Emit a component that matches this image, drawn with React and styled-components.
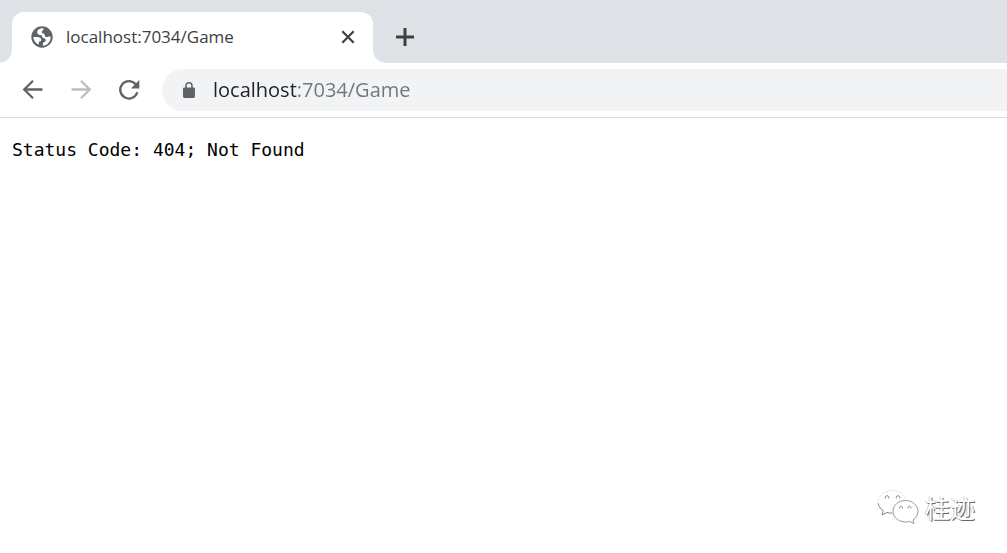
import React from "react";
import styled, { createGlobalStyle } from "styled-components";

const GlobalStyle = createGlobalStyle`
  * {
    box-sizing: border-box;
  }
  body {
    margin: 0;
    background: #fff;
    font-family: "Open Sans", "Noto Sans", sans-serif;
  }
`;

const Browser = styled.div`
  display: flex;
  flex-direction: column;
  min-height: 100vh;
`;

const TabStrip = styled.header`
  display: flex;
  align-items: stretch;
  padding: 12px 12px 0;
  background: #dee1e6;
`;

const Tab = styled.div`
  position: relative;
  display: flex;
  align-items: center;
  width: 361px;
  height: 51px;
  padding: 0 13px 2px 18px;
  border-radius: 12px 12px 0 0;
  background: #fff;
  /* flared feet on both sides of the tab */
  &::before,
  &::after {
    content: "";
    position: absolute;
    bottom: 0;
    width: 12px;
    height: 12px;
  }
  &::before {
    right: 100%;
    background: radial-gradient(circle at 0 0, transparent 11px, #fff 12px);
  }
  &::after {
    left: 100%;
    background: radial-gradient(circle at 100% 0, transparent 11px, #fff 12px);
  }
`;

const TabTitle = styled.span`
  flex: 1;
  margin-left: 12px;
  font-size: 17px;
  line-height: 24px;
  color: #3c4043;
`;

const IconButton = styled.button`
  display: flex;
  align-items: center;
  justify-content: center;
  width: ${({ $small }) => ($small ? "24px" : "40px")};
  height: ${({ $small }) => ($small ? "24px" : "40px")};
  padding: 0;
  border: 0;
  border-radius: 50%;
  background: none;
  color: ${({ $dark }) => ($dark ? "#3c4043" : "#5f6368")};
  &:disabled {
    color: #bdbec0;
  }
`;

const NewTab = styled.div`
  display: flex;
  align-items: center;
  margin-left: 12px;
  padding-bottom: 2px;
`;

const Toolbar = styled.nav`
  display: flex;
  align-items: center;
  padding: 6px 0 6px 13px;
  border-bottom: 1px solid #dadce0;
`;

const NavButtons = styled.div`
  display: flex;
  gap: 8px;
  margin-right: 13px;
`;

const AddressBar = styled.label`
  display: flex;
  flex: 1;
  align-items: center;
  height: 42px;
  padding-left: 20px;
  border-radius: 21px 0 0 21px;
  background: #f1f3f4;
  color: #5f6368;
`;

/* the host part of the address is darker than the rest */
const AddressInput = styled.input`
  flex: 1;
  min-width: 0;
  margin-left: 17px;
  padding: 0;
  border: 0;
  outline: 0;
  font: 20px/28px "Open Sans", "Noto Sans", sans-serif;
  color: transparent;
  caret-color: #202124;
  background: linear-gradient(to right, #202124 84px, #70757a 84px);
  background-clip: text;
  -webkit-background-clip: text;
`;

const Page = styled.main`
  display: flex;
  flex: 1;
  flex-direction: column;
  justify-content: space-between;
  padding: 20px 32px 28px 12px;
`;

const Message = styled.pre`
  margin: 0;
  font: 18px/24px "DejaVu Sans Mono", monospace;
  color: #000;
`;

const Watermark = styled.div`
  display: flex;
  align-items: center;
  align-self: flex-end;
  gap: 6px;
  font: 25px/32px "Noto Sans CJK SC", sans-serif;
  color: #fff;
  text-shadow: 1px 1px 0 #666, -1px 0 0 #ccc;
`;

const GlobeIcon = () => (
  <svg width="24" height="24" viewBox="0 0 24 24" aria-hidden="true">
    <circle cx="12" cy="12" r="10.7" fill="#5f6368" />
    <path
      fill="#fff"
      d="M13.500 3.400C10.300 3 7.200 4.800 7.200 7.200c0 2 1.500 2.600 3.200 2.700 1.400.1 1.700.7 1.800 1.700.1 1.200.8 1.600 1.800 1.700 1.100.2 1.700.8 1.700 1.900 0 1-.6 1.500-1.500 1.900-.9.4-1.300.9-1.300 1.700v1.900c4.300-.4 7.700-4 7.700-8.300v-.8h-1.400c-.8 0-1.200.6-2.200.6-1.500 0-2.200-.8-2.300-2-.1-1.300-.8-1.800-1.900-2-.8-.2-1.200-.7-1.100-1.400.1-.9.8-1.100 1.300-1.600.4-.4.500-1.100.5-1.800z"
    />
    <path fill="#fff" d="M3.400 11.900h3.800c2.300 0 4 1.200 4 3.100 0 .9-.6 1.400-1.400 1.400H8.900v3.100c-3.200-1.200-5.500-4.200-5.500-7.600z" />
  </svg>
);

const LockIcon = () => (
  <svg width="14" height="18" viewBox="0 0 14 18" aria-hidden="true">
    <rect x="1" y="6.500" width="12" height="10.500" rx="1.400" fill="currentColor" />
    <path d="M4 7V4.800a3 3 0 0 1 6 0V7" fill="none" stroke="currentColor" strokeWidth="1.500" />
  </svg>
);

const ArrowIcon = ({ forward }) => (
  <svg width="22" height="22" viewBox="0 0 22 22" aria-hidden="true">
    <path
      d={forward ? "M1.500 10.500H19.500M11 1.700l8.800 8.800-8.800 8.800" : "M20.500 10.500H2.500M11 1.700L2.200 10.500l8.800 8.800"}
      fill="none"
      stroke="currentColor"
      strokeWidth="2.300"
    />
  </svg>
);

const ReloadIcon = () => (
  <svg width="22" height="22" viewBox="0 0 22 22" aria-hidden="true">
    <path d="M19.300 13.200A8.700 8.700 0 1 1 17.600 5.200" fill="none" stroke="currentColor" strokeWidth="2.300" />
    <path d="M21.300 1v8.400h-8.400z" fill="currentColor" />
  </svg>
);

const CloseIcon = () => (
  <svg width="14" height="14" viewBox="0 0 14 14" aria-hidden="true">
    <path d="M1.300 1.300l11.400 11.400M12.700 1.300L1.300 12.700" stroke="currentColor" strokeWidth="2.200" />
  </svg>
);

const PlusIcon = () => (
  <svg width="18" height="18" viewBox="0 0 18 18" aria-hidden="true">
    <path d="M9 0v18M0 9h18" stroke="currentColor" strokeWidth="3" />
  </svg>
);

const ChatIcon = () => (
  <svg width="42" height="36" viewBox="0 0 42 36" aria-hidden="true">
    <g fill="#fff" strokeLinejoin="round">
      <path
        d="M15 1.500C7.300 1.500 1 6.500 1 12.700c0 3.700 2 6.900 5.200 9L5 26l5-2.600c1.600.5 3.300.8 5 .8 7.700 0 14-5.200 14-11.500S22.700 1.500 15 1.500z"
        stroke="#ddd"
        strokeWidth=".8"
        strokeDasharray="3 1"
      />
      <path d="M1.200 14.500c.5 3 2.300 5.500 5 7.200L5 26l5-2.600c1.600.5 3.300.8 5 .8" fill="none" stroke="#888" />
      <path
        d="M28.500 11.500C21.600 11.500 16 16.300 16 22.200S21.600 33 28.500 33c1.400 0 2.800-.2 4-.6l4.500 2.300-1-3.700c3-2 5-5 5-8.800 0-5.900-5.600-10.700-12.500-10.700z"
        stroke="#999"
      />
    </g>
    <g fill="none" stroke="#888">
      <path d="M8.500 9.500a1.800 1.800 0 1 1 3 0M19.500 9.500a1.800 1.800 0 1 1 3 0" />
      <path d="M22.800 19.500a1.500 1.500 0 1 1 2.600 0M31.200 19.500a1.500 1.500 0 1 1 2.600 0" />
    </g>
  </svg>
);

const App = () => {
  return (
    <Browser>
      <GlobalStyle />
      <TabStrip>
        <Tab>
          <GlobeIcon />
          <TabTitle>localhost:7034/Game</TabTitle>
          <IconButton $small $dark type="button" aria-label="Close tab">
            <CloseIcon />
          </IconButton>
        </Tab>
        <NewTab>
          <IconButton $dark type="button" aria-label="New tab">
            <PlusIcon />
          </IconButton>
        </NewTab>
      </TabStrip>
      <Toolbar>
        <NavButtons>
          <IconButton type="button" aria-label="Back">
            <ArrowIcon />
          </IconButton>
          <IconButton type="button" aria-label="Forward" disabled>
            <ArrowIcon forward />
          </IconButton>
          <IconButton type="button" aria-label="Reload">
            <ReloadIcon />
          </IconButton>
        </NavButtons>
        <AddressBar>
          <LockIcon />
          <AddressInput type="text" aria-label="Address" defaultValue="localhost:7034/Game" />
        </AddressBar>
      </Toolbar>
      <Page>
        <Message>Status Code: 404; Not Found</Message>
        <Watermark>
          <ChatIcon />
          <span>桂迹</span>
        </Watermark>
      </Page>
    </Browser>
  );
};
export default App;
